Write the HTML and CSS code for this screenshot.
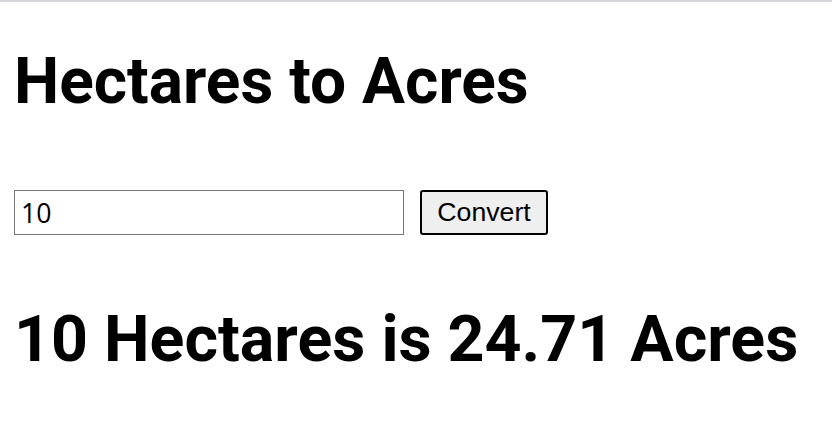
FILE: index.html
```html
<!DOCTYPE html>
<html>
<head>
<meta charset="utf-8">
<link rel="stylesheet" href="styles.css">
</head>
<body>
<main class="page">
  <h1 class="title">Hectares to Acres</h1>
  <form class="row">
    <input class="field" type="text" value="10">
    <button class="btn" type="button">Convert</button>
  </form>
  <h2 class="result">10 Hectares is 24.71 Acres</h2>
</main>
</body>
</html>
```
FILE: styles.css
```css
html, body {
  margin: 0;
  padding: 0;
  background: #fff;
}
body {
  border-top: 2px solid #d6d6da;
  font-family: Roboto, "Liberation Sans", sans-serif;
  color: #000;
}
.page {
  padding: 0 14px;
}
.title {
  margin: 0;
  padding-top: 40px;
  font-size: 64px;
  font-weight: 700;
  line-height: 80px;
}
.row {
  display: flex;
  align-items: center;
  gap: 16px;
  margin-top: 68px;
}
.field {
  box-sizing: border-box;
  width: 390px;
  height: 45px;
  border: 1px solid #767676;
  padding: 0 6px;
  font-family: "Open Sans", sans-serif;
  font-size: 26.667px;
  margin: 0;
}
.btn {
  box-sizing: border-box;
  height: 45px;
  width: 128px;
  padding: 0;
  border: 2px solid #000;
  border-radius: 3px;
  background: #efefef;
  font-family: "Liberation Sans", Arial, sans-serif;
  font-size: 26.667px;
  margin: 0;
}
.result {
  margin: 64px 0 0;
  font-size: 64.5px;
  font-weight: 700;
  line-height: 80px;
}
```
